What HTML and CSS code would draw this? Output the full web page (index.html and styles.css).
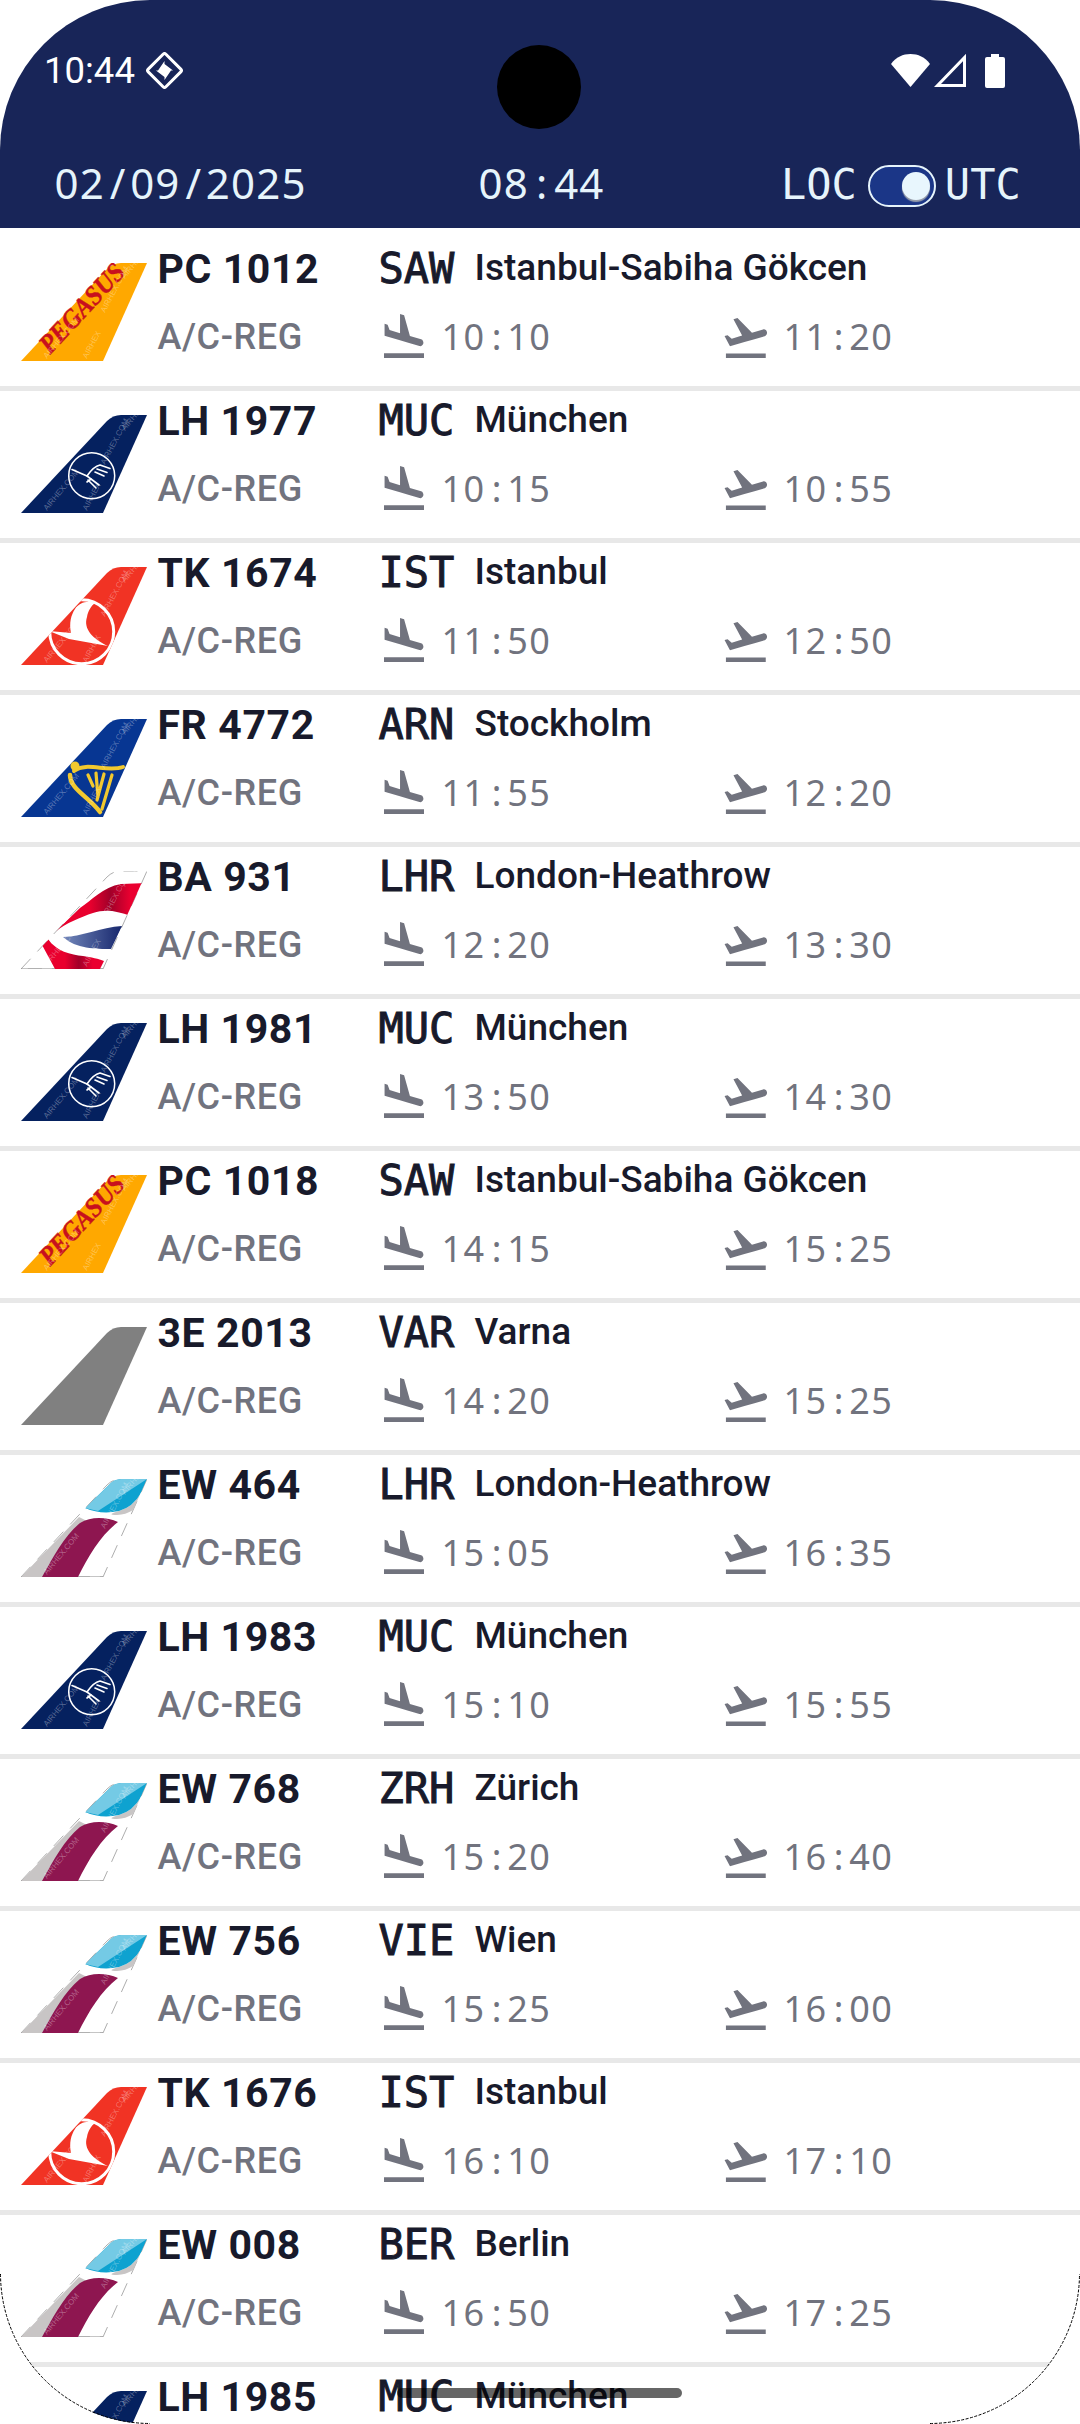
FILE: index.html
```html
<!DOCTYPE html>
<html lang="en">
<head>
<meta charset="utf-8">
<title>Flights</title>
<link rel="stylesheet" href="styles.css">
</head>
<body>
<svg class="defs" width="0" height="0">
  <defs>
    <linearGradient id="baRed" x1="0" x2="1" y1="0" y2="0"><stop offset="0" stop-color="#e9002e"/><stop offset=".38" stop-color="#e9002e"/><stop offset=".6" stop-color="#a10029"/><stop offset=".82" stop-color="#ea0030"/></linearGradient>
    <linearGradient id="baBlue" x1="0" x2="1" y1="0" y2="0"><stop offset="0" stop-color="#7388bb"/><stop offset="1" stop-color="#17276d"/></linearGradient>
    <clipPath id="finClip"><path d="M0 98L86 6Q92 0 100 0L126 0L82 98Z"/></clipPath>
    <symbol id="wm" viewBox="0 0 126 98">
      <g class="wm">
        <text transform="translate(58 28) rotate(-50)">AIRHEX.COM</text>
        <text transform="translate(84 50) rotate(-62)">AIRHEX.COM</text>
        <text transform="translate(26 96) rotate(-50)">AIRHEX.COM</text>
        <text transform="translate(66 96) rotate(-62)">AIRHEX</text>
        <text transform="translate(104 16) rotate(-50)">AIRHEX</text>
      </g>
    </symbol>
    <symbol id="t-pc" viewBox="0 0 126 98">
      <path class="fin pc" d="M0 98L86 6Q92 0 100 0L126 0L82 98Z"/>
      <text class="pegasus" transform="translate(29 92) rotate(-47)" textLength="112" lengthAdjust="spacingAndGlyphs">PEGASUS</text>
      <use href="#wm"/>
    </symbol>
    <symbol id="t-lh" viewBox="0 0 126 98">
      <path class="fin lh" d="M0 98L86 6Q92 0 100 0L126 0L82 98Z"/>
      <circle class="ring" cx="70.7" cy="60.7" r="23"/>
      <g class="crane">
        <path d="M51 54.5L66 61L70 64L66 67"/>
        <path d="M66 61C70 55 74 51 79 50L89 53.5M76 54L86 57.5M74 57L83 61"/>
        <path d="M70 64L78 70M67 65L75 73"/>
      </g>
      <use href="#wm"/>
    </symbol>
    <symbol id="t-tk" viewBox="0 0 126 98">
      <path class="fin tk" d="M0 98L86 6Q92 0 100 0L126 0L82 98Z"/>
      <g clip-path="url(#finClip)">
        <circle class="ring tk-ring" cx="60.7" cy="64.7" r="32"/>
        <path class="white" d="M74 36C66 33 58 36 54 42C50 48 48 56 50 66L28 64L48 72L87 79C72 72 62 62 66 50C67 44 70 39 74 36Z"/>
      </g>
      <use href="#wm"/>
    </symbol>
    <symbol id="t-fr" viewBox="0 0 126 98">
      <path class="fin fr" d="M0 98L86 6Q92 0 100 0L126 0L82 98Z"/>
      <g class="harp">
        <path class="h1" d="M49 56C49 70 68 78 79 93"/>
        <path class="h2" d="M53 52C66 42 86 54 102 48"/>
        <path d="M67 56L72 67M75 54L77 78M83 55L76 81M91 56L81 90"/>
      </g>
      <circle class="harpdot" cx="54" cy="47" r="4.5"/>
      <use href="#wm"/>
    </symbol>
    <symbol id="t-ba" viewBox="0 0 126 98">
      <path class="fin ba" d="M0 98L86 6Q92 0 100 0L126 0L82 98Z"/>
      <path class="base" d="M0 98H82"/>
      <g clip-path="url(#finClip)">
        <path fill="url(#baRed)" d="M34 61L59 37C70 30 82 16 100 13L126 12L110 45C95 40 85 38 72 42C60 46 45 52 34 61Z"/>
        <path fill="url(#baBlue)" d="M42 66C60 66 80 56 101 55L90 78C75 78 55 78 42 66Z"/>
        <path fill="url(#baRed)" d="M20 72L27 68C35 80 50 84 62 85C70 86 78 88 83 90L79 98L34 98Z"/>
      </g>
      <use href="#wm"/>
    </symbol>
    <symbol id="t-3e" viewBox="0 0 126 98">
      <path class="fin gray" d="M0 98L86 6Q92 0 100 0L126 0L82 98Z"/>
    </symbol>
    <symbol id="t-ew" viewBox="0 0 126 98">
      <path class="fin ba" d="M0 98L86 6Q92 0 100 0L126 0L82 98Z"/>
      <path class="base" d="M0 98H82"/>
      <g clip-path="url(#finClip)">
        <path class="ew-grey" d="M120 14Q112 28 98 32Q84 36 96 36Q114 35 120 20Z"/>
        <path class="ew-blue" d="M126 0L100 0Q94 0 90 4L64 29Q80 36 98 32Q112 28 120 14Z"/>
        <path class="ew-light" d="M126 0L100 0Q94 0 90 4L64 29L77 32Z"/>
        <path class="ew-grey" d="M0 98L58 38L66 42L21 98Z"/>
        <path class="ew-purple" d="M21 98C32 78 44 56 59 44C70 37 86 38 97 43C80 56 68 76 57 98Z"/>
      </g>
      <use href="#wm"/>
    </symbol>
    <symbol id="i-land" viewBox="2.5 2 19 19" preserveAspectRatio="none">
      <path d="M2.5 19h19v2h-19zm7.18-5.73l4.35 1.16 5.31 1.42c.8.21 1.62-.26 1.84-1.06.21-.8-.26-1.62-1.06-1.84l-5.31-1.42-2.76-9.02L10.12 2v8.28L5.15 8.95l-.93-2.32-1.45-.39v5.17l1.6.43 5.31 1.43z"/>
    </symbol>
    <symbol id="i-off" viewBox="1.1 3.57 21 17.43" preserveAspectRatio="none">
      <path d="M2.5 19h19v2h-19zm19.57-9.36c-.21-.8-1.04-1.28-1.84-1.06L14.92 10l-6.9-6.43-1.93.51 4.14 7.17-4.97 1.33-1.97-1.54-1.45.39 1.82 3.16.77 1.33 1.6-.43 5.31-1.42 4.35-1.16L21 11.49c.81-.23 1.28-1.05 1.07-1.85z"/>
    </symbol>
  </defs>
</svg>

<div class="screen">
  <header class="head">
    <div class="status">
      <div class="status-left">
        <span class="clock">10:44</span>
        <svg class="diamond" viewBox="0 0 37 37">
          <rect class="dia-box" x="6" y="6" width="25" height="25" rx="2" transform="rotate(45 18.5 18.5)"/>
          <path class="dia-in" d="M18.5 9L18.5 18.5L12 18.5ZM27 18.5L18.5 18.5L18.5 12ZM18.5 28L18.5 18.5L25 18.5ZM10 18.5L18.5 18.5L18.5 25Z"/>
        </svg>
      </div>
      <div class="status-right">
        <svg class="wifi" viewBox="0 0 39 33"><path d="M0 10C5 3 12 0 19.5 0S34 3 39 10L19.5 33Z"/></svg>
        <svg class="signal" viewBox="0 0 32 33"><path d="M30.5 3.5V31.5H3.5Z"/></svg>
        <svg class="battery" viewBox="0 0 20 34"><path d="M6 0H14V3H18Q20 3 20 5V32Q20 34 18 34H2Q0 34 0 32V5Q0 3 2 3H6Z"/></svg>
      </div>
    </div>
    <div class="camera"></div>
    <div class="bar">
      <span class="big date">02<i>/</i>09<i>/</i>2025</span>
      <span class="big now">08<i>:</i>44</span>
      <div class="zone">
        <span class="zone-label">LOC</span>
        <span class="switch"><span class="thumb"></span></span>
        <span class="zone-label">UTC</span>
      </div>
    </div>
  </header>

  <main class="list">
    <div class="row"><svg class="tail"><use href="#t-pc"/></svg><div class="info"><div class="l1"><span class="flt">PC 1012</span><span class="code">SAW</span><span class="dest">Istanbul-Sabiha Gökcen</span></div><div class="l2"><span class="reg">A/C-REG</span><span class="leg"><svg class="land"><use href="#i-land"/></svg><span class="time">10<i>:</i>10</span></span><span class="leg"><svg class="off"><use href="#i-off"/></svg><span class="time">11<i>:</i>20</span></span></div></div></div>
    <div class="row"><svg class="tail"><use href="#t-lh"/></svg><div class="info"><div class="l1"><span class="flt">LH 1977</span><span class="code">MUC</span><span class="dest">München</span></div><div class="l2"><span class="reg">A/C-REG</span><span class="leg"><svg class="land"><use href="#i-land"/></svg><span class="time">10<i>:</i>15</span></span><span class="leg"><svg class="off"><use href="#i-off"/></svg><span class="time">10<i>:</i>55</span></span></div></div></div>
    <div class="row"><svg class="tail"><use href="#t-tk"/></svg><div class="info"><div class="l1"><span class="flt">TK 1674</span><span class="code">IST</span><span class="dest">Istanbul</span></div><div class="l2"><span class="reg">A/C-REG</span><span class="leg"><svg class="land"><use href="#i-land"/></svg><span class="time">11<i>:</i>50</span></span><span class="leg"><svg class="off"><use href="#i-off"/></svg><span class="time">12<i>:</i>50</span></span></div></div></div>
    <div class="row"><svg class="tail"><use href="#t-fr"/></svg><div class="info"><div class="l1"><span class="flt">FR 4772</span><span class="code">ARN</span><span class="dest">Stockholm</span></div><div class="l2"><span class="reg">A/C-REG</span><span class="leg"><svg class="land"><use href="#i-land"/></svg><span class="time">11<i>:</i>55</span></span><span class="leg"><svg class="off"><use href="#i-off"/></svg><span class="time">12<i>:</i>20</span></span></div></div></div>
    <div class="row"><svg class="tail"><use href="#t-ba"/></svg><div class="info"><div class="l1"><span class="flt">BA 931</span><span class="code">LHR</span><span class="dest">London-Heathrow</span></div><div class="l2"><span class="reg">A/C-REG</span><span class="leg"><svg class="land"><use href="#i-land"/></svg><span class="time">12<i>:</i>20</span></span><span class="leg"><svg class="off"><use href="#i-off"/></svg><span class="time">13<i>:</i>30</span></span></div></div></div>
    <div class="row"><svg class="tail"><use href="#t-lh"/></svg><div class="info"><div class="l1"><span class="flt">LH 1981</span><span class="code">MUC</span><span class="dest">München</span></div><div class="l2"><span class="reg">A/C-REG</span><span class="leg"><svg class="land"><use href="#i-land"/></svg><span class="time">13<i>:</i>50</span></span><span class="leg"><svg class="off"><use href="#i-off"/></svg><span class="time">14<i>:</i>30</span></span></div></div></div>
    <div class="row"><svg class="tail"><use href="#t-pc"/></svg><div class="info"><div class="l1"><span class="flt">PC 1018</span><span class="code">SAW</span><span class="dest">Istanbul-Sabiha Gökcen</span></div><div class="l2"><span class="reg">A/C-REG</span><span class="leg"><svg class="land"><use href="#i-land"/></svg><span class="time">14<i>:</i>15</span></span><span class="leg"><svg class="off"><use href="#i-off"/></svg><span class="time">15<i>:</i>25</span></span></div></div></div>
    <div class="row"><svg class="tail"><use href="#t-3e"/></svg><div class="info"><div class="l1"><span class="flt">3E 2013</span><span class="code">VAR</span><span class="dest">Varna</span></div><div class="l2"><span class="reg">A/C-REG</span><span class="leg"><svg class="land"><use href="#i-land"/></svg><span class="time">14<i>:</i>20</span></span><span class="leg"><svg class="off"><use href="#i-off"/></svg><span class="time">15<i>:</i>25</span></span></div></div></div>
    <div class="row"><svg class="tail"><use href="#t-ew"/></svg><div class="info"><div class="l1"><span class="flt">EW 464</span><span class="code">LHR</span><span class="dest">London-Heathrow</span></div><div class="l2"><span class="reg">A/C-REG</span><span class="leg"><svg class="land"><use href="#i-land"/></svg><span class="time">15<i>:</i>05</span></span><span class="leg"><svg class="off"><use href="#i-off"/></svg><span class="time">16<i>:</i>35</span></span></div></div></div>
    <div class="row"><svg class="tail"><use href="#t-lh"/></svg><div class="info"><div class="l1"><span class="flt">LH 1983</span><span class="code">MUC</span><span class="dest">München</span></div><div class="l2"><span class="reg">A/C-REG</span><span class="leg"><svg class="land"><use href="#i-land"/></svg><span class="time">15<i>:</i>10</span></span><span class="leg"><svg class="off"><use href="#i-off"/></svg><span class="time">15<i>:</i>55</span></span></div></div></div>
    <div class="row"><svg class="tail"><use href="#t-ew"/></svg><div class="info"><div class="l1"><span class="flt">EW 768</span><span class="code">ZRH</span><span class="dest">Zürich</span></div><div class="l2"><span class="reg">A/C-REG</span><span class="leg"><svg class="land"><use href="#i-land"/></svg><span class="time">15<i>:</i>20</span></span><span class="leg"><svg class="off"><use href="#i-off"/></svg><span class="time">16<i>:</i>40</span></span></div></div></div>
    <div class="row"><svg class="tail"><use href="#t-ew"/></svg><div class="info"><div class="l1"><span class="flt">EW 756</span><span class="code">VIE</span><span class="dest">Wien</span></div><div class="l2"><span class="reg">A/C-REG</span><span class="leg"><svg class="land"><use href="#i-land"/></svg><span class="time">15<i>:</i>25</span></span><span class="leg"><svg class="off"><use href="#i-off"/></svg><span class="time">16<i>:</i>00</span></span></div></div></div>
    <div class="row"><svg class="tail"><use href="#t-tk"/></svg><div class="info"><div class="l1"><span class="flt">TK 1676</span><span class="code">IST</span><span class="dest">Istanbul</span></div><div class="l2"><span class="reg">A/C-REG</span><span class="leg"><svg class="land"><use href="#i-land"/></svg><span class="time">16<i>:</i>10</span></span><span class="leg"><svg class="off"><use href="#i-off"/></svg><span class="time">17<i>:</i>10</span></span></div></div></div>
    <div class="row"><svg class="tail"><use href="#t-ew"/></svg><div class="info"><div class="l1"><span class="flt">EW 008</span><span class="code">BER</span><span class="dest">Berlin</span></div><div class="l2"><span class="reg">A/C-REG</span><span class="leg"><svg class="land"><use href="#i-land"/></svg><span class="time">16<i>:</i>50</span></span><span class="leg"><svg class="off"><use href="#i-off"/></svg><span class="time">17<i>:</i>25</span></span></div></div></div>
    <div class="row"><svg class="tail"><use href="#t-lh"/></svg><div class="info"><div class="l1"><span class="flt">LH 1985</span><span class="code">MUC</span><span class="dest">München</span></div></div></div>
  </main>

  <div class="pill"></div>
</div>
<svg class="edge" viewBox="0 0 1080 2424"><path d="M0.5 2274A150 150 0 0 0 150 2423.5M930 2423.5A150 150 0 0 0 1079.5 2274"/></svg>
</body>
</html>
```
FILE: styles.css
```css
* { box-sizing: border-box; }
html, body { margin: 0; padding: 0; background: #fff; }
body { position: relative; width: 1080px; height: 2424px; overflow: hidden; }
.defs { position: absolute; }

.screen {
  position: relative;
  width: 1080px;
  height: 2424px;
  border-radius: 150px;
  overflow: hidden;
  background: #fff;
}
.edge {
  position: absolute;
  left: 0;
  top: 0;
  width: 1080px;
  height: 2424px;
  pointer-events: none;
}
.edge path { fill: none; stroke: #000; stroke-width: 1; stroke-dasharray: 3 1.5; }

/* header */
.head {
  position: relative;
  height: 228px;
  background: #182558;
  color: #e6f4fb;
}
.status {
  height: 160px;
  padding: 52px 75px 0 44px;
  display: flex;
  justify-content: space-between;
  align-items: flex-start;
}
.status-left { display: flex; align-items: center; gap: 11px; height: 37px; }
.clock { font: 400 36.5px/37px Roboto, sans-serif; color: #fff; }
.diamond { width: 37px; height: 37px; display: block; }
.dia-box { fill: none; stroke: #fff; stroke-width: 3; }
.dia-in { fill: #fff; }
.status-right { display: flex; align-items: flex-start; gap: 4px; padding-top: 2px; }
.wifi { width: 39px; height: 33px; display: block; fill: #fff; }
.signal { width: 32px; height: 33px; display: block; fill: none; stroke: #fff; stroke-width: 3; }
.battery { width: 20px; height: 34px; display: block; fill: #fff; margin-left: 15px; }
.camera {
  position: absolute;
  left: 497px;
  top: 45px;
  width: 84px;
  height: 84px;
  border-radius: 50%;
  background: #000;
}
.bar {
  height: 68px;
  padding: 0 58px 0 54.5px;
  display: flex;
  align-items: flex-start;
}
.big {
  font: 400 42px/46px "Noto Sans", sans-serif;
  letter-spacing: 1.2px;
  white-space: nowrap;
}
.big i { display: inline-block; width: 25.2px; text-align: center; font-style: normal; letter-spacing: 0; }
.date { width: 424px; }
.now { width: 302.5px; }
.zone { display: flex; align-items: center; height: 46px; margin-top: 2px; }
.zone-label { font: 400 42px/46px "DejaVu Sans Mono", monospace; }
.switch {
  display: block;
  position: relative;
  width: 68px;
  height: 42px;
  margin: 1px 9px 0 11px;
  border-radius: 21px;
  border: 2px solid #e6f4fb;
  background: #1b3687;
}
.thumb {
  position: absolute;
  left: 32px;
  top: 5px;
  width: 28px;
  height: 28px;
  border-radius: 50%;
  background: #e8f6fd;
  box-shadow: 0 2px 1px #9aa0ac;
}

/* list */
.list { padding-top: 11px; }
.row {
  display: flex;
  height: 152px;
  padding-left: 21px;
  border-bottom: 5px solid #e8e8e8;
}
.tail { width: 126px; height: 98px; margin-top: 24px; flex: none; display: block; }
.info { margin-left: 10.5px; flex: 1; padding-top: 5px; }
.l1 { display: flex; align-items: flex-start; height: 50px; }
.flt { width: 221px; font: 700 41px/50px Roboto, sans-serif; color: #181a2b; letter-spacing: .6px; white-space: nowrap; }
.code {
  width: 96px;
  font: 400 42px/50px "DejaVu Sans Mono", monospace;
  color: #181a2b;
  -webkit-text-stroke: 1px #181a2b;
}
.dest { font: 500 37px/48px Roboto, sans-serif; color: #181a2b; white-space: nowrap; }
.l2 { display: flex; align-items: flex-start; height: 44px; margin-top: 20px; color: #71737e; }
.reg { width: 226.5px; font: 500 36px/47px Roboto, sans-serif; letter-spacing: .6px; }
.leg { width: 339px; display: flex; align-items: flex-start; }
.land { width: 40px; height: 44px; fill: #71737e; margin-right: 17.5px; display: block; flex: none; }
.off { width: 44px; height: 40px; margin-top: 4px; fill: #71737e; margin-right: 16.5px; display: block; flex: none; }
.time { font: 400 36px/46px "Noto Sans", sans-serif; letter-spacing: 1.5px; white-space: nowrap; }
.time i { display: inline-block; width: 21.6px; text-align: center; font-style: normal; letter-spacing: 0; }

/* tails */
.fin.pc { fill: #ffa800; }
.fin.lh { fill: #05215f; }
.fin.tk { fill: #f13324; }
.fin.fr { fill: #073692; }
.fin.gray { fill: #808080; }
.fin.ba { fill: #fff; stroke: #8a8a8a; stroke-width: .7; stroke-dasharray: 14 10; }
.base { fill: none; stroke: #8a8a8a; stroke-width: 1; }
.pegasus { font: italic 700 27px "Liberation Serif", serif; fill: #c8101e; stroke: #c8101e; stroke-width: .4; }
.wm text { font: 400 8px "Liberation Sans", sans-serif; fill: #fff; fill-opacity: .32; }
.ring { fill: none; stroke: #fff; stroke-width: 1.5; }
.crane { fill: none; stroke: #fff; stroke-width: 1.6; stroke-linecap: round; stroke-linejoin: round; }
.tk-ring { stroke-width: 3; }
.white { fill: #fff; }
.harp { fill: none; stroke: #f2c92f; stroke-width: 3.2; stroke-linecap: round; }
.h1 { stroke-width: 4.5; }
.h2 { stroke-width: 4; }
.harpdot { fill: #f2c92f; }
.ew-grey { fill: #c8c5c5; }
.ew-blue { fill: #0ea2d0; }
.ew-light { fill: #74cae5; }
.ew-purple { fill: #8e1650; }

.pill {
  position: absolute;
  left: 397px;
  top: 2388px;
  width: 285px;
  height: 10px;
  border-radius: 5px;
  background: rgba(0, 0, 0, .6);
}
```
